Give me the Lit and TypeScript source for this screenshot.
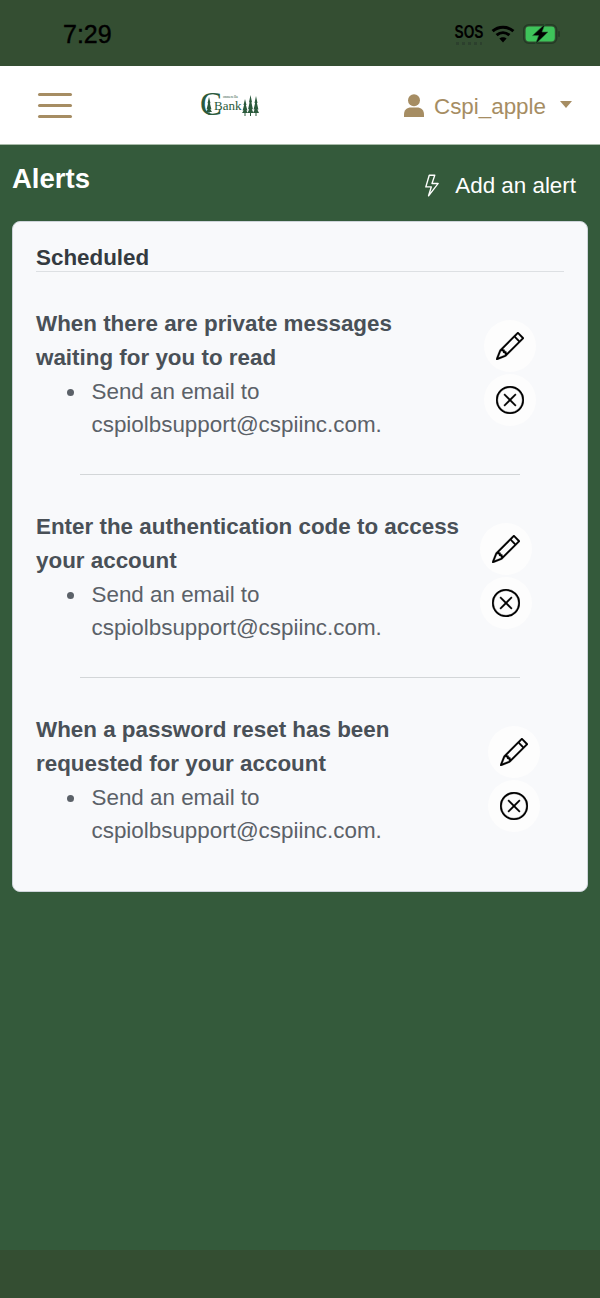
import { LitElement, html, css, svg } from "lit";
import { customElement } from "lit/decorators.js";

const pencil = svg`<path d="M12.146.146a.5.5 0 0 1 .708 0l3 3a.5.5 0 0 1 0 .708l-10 10a.5.5 0 0 1-.168.11l-5 2a.5.5 0 0 1-.65-.65l2-5a.5.5 0 0 1 .11-.168l10-10zM11.207 2.5 13.5 4.793 14.793 3.5 12.5 1.207 11.207 2.5zm1.586 3L10.5 3.207 4 9.707V10h.5a.5.5 0 0 1 .5.5v.5h.5a.5.5 0 0 1 .5.5v.5h.293l6.5-6.5zm-9.761 5.175-.106.106-1.528 3.821 3.821-1.528.106-.106A.5.5 0 0 1 5 12.5V12h-.5a.5.5 0 0 1-.5-.5V11h-.5a.5.5 0 0 1-.468-.325z"/>`;
const xCircle = svg`<path d="M8 15A7 7 0 1 1 8 1a7 7 0 0 1 0 14zm0 1A8 8 0 1 0 8 0a8 8 0 0 0 0 16z"/><path d="M4.646 4.646a.5.5 0 0 1 .708 0L8 7.293l2.646-2.647a.5.5 0 0 1 .708.708L8.707 8l2.647 2.646a.5.5 0 0 1-.708.708L8 8.707l-2.646 2.647a.5.5 0 0 1-.708-.708L7.293 8 4.646 5.354a.5.5 0 0 1 0-.708z"/>`;
const bolt = svg`<path d="M5.52.359A.5.5 0 0 1 6 0h4a.5.5 0 0 1 .474.658L8.694 6H12.5a.5.5 0 0 1 .395.807l-7 9a.5.5 0 0 1-.873-.454L6.823 9.5H3.5a.5.5 0 0 1-.48-.641l2.5-8.5zM6.374 1 4.168 8.5H7.5a.5.5 0 0 1 .478.647L6.78 13.04 11.478 7H8a.5.5 0 0 1-.474-.658L9.306 1H6.374z"/>`;

/* Slim stacked conifer for the bank mark: x is the trunk, top/bottom the extent */
const tree = (x: number, top: number, bottom: number) => {
  const h = bottom - top;
  return svg`<path d="M${x} ${top} L${x + 1.5} ${top + h * 0.35} H${x + 0.9} L${x + 2.4} ${top + h * 0.68} H${x + 1.3} L${x + 3} ${bottom - 3} H${x + 0.5} V${bottom} H${x - 0.5} V${bottom - 3} H${x - 3} L${x - 1.3} ${top + h * 0.68} H${x - 2.4} L${x - 0.9} ${top + h * 0.35} H${x - 1.5} Z"/>`;
};

interface Alert {
  title: string;
  /* Left edge of the action buttons within the row */
  actionsLeft: number;
}

const alerts: Alert[] = [
  { title: "When there are private messages waiting for you to read", actionsLeft: 448 },
  { title: "Enter the authentication code to access your account", actionsLeft: 444 },
  { title: "When a password reset has been requested for your account", actionsLeft: 452 },
];

@customElement("app-root")
export class AppRoot extends LitElement {
  static styles = css`
    :host {
      display: flex;
      flex-direction: column;
      height: 1298px;
      background: #345a3b;
      font-family: "Liberation Sans", Arial, sans-serif;
      font-size: 22.4px;
      line-height: 33.6px;
    }
    .status {
      height: 66px;
      flex: none;
      background: #344e32;
      display: flex;
      align-items: center;
      justify-content: space-between;
      padding: 0 39px 0 63px;
      box-sizing: border-box;
      color: #000;
    }
    .time {
      font-size: 25px;
      -webkit-text-stroke: 0.4px #000;
      line-height: 30px;
      margin-top: 2px;
    }
    .indicators {
      display: flex;
      align-items: center;
      gap: 8px;
      margin-top: 1px;
    }
    .sos {
      font-size: 18px;
      font-weight: 700;
      line-height: 15px;
      width: 29px;
      display: flex;
      flex-direction: column;
      align-items: center;
      margin-top: 3px;
    }
    .sos span {
      display: block;
      transform: scaleX(0.76);
    }
    .sos i {
      display: block;
      width: 26px;
      height: 3px;
      margin-top: 2px;
      background: repeating-linear-gradient(90deg, #27372a 0 3px, transparent 3px 6px);
      opacity: 0.6;
    }
    .wifi { width: 24px; height: 18px; display: block; }
    .battery { width: 38px; height: 20px; display: block; }

    .nav {
      height: 79px;
      flex: none;
      background: #fff;
      display: flex;
      align-items: center;
      justify-content: space-between;
      padding: 0 28px 0 38px;
      box-sizing: border-box;
      border-bottom: 1px solid #a9bba9;
      color: #a68d63;
    }
    .burger {
      display: flex;
      flex-direction: column;
      gap: 8px;
      width: 34px;
      margin-top: 1px;
    }
    .burger i {
      display: block;
      height: 3px;
      border-radius: 2px;
      background: #a68d63;
    }
    .logo {
      width: 60px;
      height: 26px;
      display: block;
      margin: 1px 0 0 -16px;
      overflow: visible;
    }
    .logo text { font-family: "Liberation Serif", serif; }
    .user {
      display: flex;
      align-items: center;
      margin-top: 3px;
    }
    .user svg { width: 20px; height: 23px; fill: currentColor; margin-right: 10px; margin-top: -3px; }
    .caret {
      width: 0;
      height: 0;
      margin-left: 14px;
      margin-bottom: 5px;
      border-left: 6.5px solid transparent;
      border-right: 6.5px solid transparent;
      border-top: 7px solid #a68d63;
    }

    .head {
      display: flex;
      justify-content: space-between;
      padding: 0 24px 0 12px;
      color: #fff;
      height: 76px;
      box-sizing: border-box;
      flex: none;
    }
    h1 {
      margin: 17px 0 0;
      font-size: 27.5px;
      line-height: 34px;
      font-weight: 700;
    }
    .add {
      display: flex;
      align-items: center;
      gap: 12px;
      height: 34px;
      margin-top: 24px;
    }
    .add svg { width: 22px; height: 23px; fill: currentColor; margin-top: -2px; }

    .card {
      margin: 0 12px;
      height: 671px;
      box-sizing: border-box;
      flex: none;
      background: #f8f9fb;
      border: 1px solid #ced4da;
      border-radius: 8px;
      padding: 19px 23px 0;
    }
    h2 {
      margin: 0;
      font-size: 22.4px;
      line-height: 33.6px;
      height: 30px;
      font-weight: 700;
      color: #343a40;
      border-bottom: 1px solid #dde0e3;
    }
    .alert {
      position: relative;
      display: flex;
      height: 203px;
      box-sizing: border-box;
      padding-top: 35px;
      border-bottom: 1px solid transparent;
    }
    .alert + .alert::before {
      content: "";
      position: absolute;
      left: 44px;
      width: 440px;
      top: -1px;
      height: 1px;
      background: #d3d6d8;
    }
    .body { width: 430px; flex: none; color: #5b6168; }
    h3 {
      margin: 0;
      font-size: 22.4px;
      line-height: 33.6px;
      font-weight: 700;
      color: #495057;
    }
    ul {
      margin: 0.4px 0 0;
      padding-left: 55.5px;
      list-style: none;
    }
    li { position: relative; }
    li::before {
      content: "";
      position: absolute;
      left: -24.5px;
      top: 14px;
      width: 7px;
      height: 7px;
      border-radius: 50%;
      background: #5b6168;
    }
    .actions {
      position: absolute;
      top: 48px;
      display: flex;
      flex-direction: column;
      gap: 2px;
    }
    .btn {
      width: 52px;
      height: 52px;
      border-radius: 50%;
      background: #fdfdfd;
      display: flex;
      align-items: center;
      justify-content: center;
    }
    .btn svg { width: 28px; height: 28px; fill: #000; stroke: #000; stroke-width: 0.15; }
    .fill { flex: 1; }
    .home {
      height: 48px;
      flex: none;
      background: #344e32;
    }
  `;

  render() {
    return html`
      <div class="status">
        <div class="time">7:29</div>
        <div class="indicators">
          <div class="sos"><span>SOS</span><i></i></div>
          <svg class="wifi" viewBox="0 0 24 18" fill="none" stroke="#000" stroke-width="3">
            <path d="M1.6 6.2C7.6 0.8 16.4 0.8 22.4 6.2"/>
            <path d="M5.6 10.2C9.4 6.8 14.6 6.8 18.4 10.2"/>
            <path d="M12 17.6 8.4 13.6C10.4 11.8 13.6 11.8 15.6 13.6Z" fill="#000" stroke="none"/>
          </svg>
          <svg class="battery" viewBox="0 0 38 20">
            <rect x="0.7" y="0.7" width="33" height="18.6" rx="5" fill="none" stroke="#243a25" stroke-width="1.4"/>
            <rect x="2.6" y="2.6" width="29.2" height="14.8" rx="3.4" fill="#3ec45a"/>
            <rect x="35.2" y="7" width="1.6" height="6" rx="0.8" fill="#243a25"/>
            <path d="M22 0 9.5 11.6H15.6L12.5 20 25 8H19Z" fill="#000" stroke="#2c6b3a" stroke-width="0.6"/>
          </svg>
        </div>
      </div>

      <div class="nav">
        <div class="burger"><i></i><i></i><i></i></div>
        <svg class="logo" viewBox="0 0 60 26" fill="#2b5a3c">
          <text x="0" y="22" font-size="33">C</text>
          <text x="14" y="17" font-size="13">Bank</text>
          <text x="23" y="5" font-size="4">onnerella</text>
          ${tree(9, 4, 22)}${tree(45, 6, 23)}${tree(50.5, 2, 23)}${tree(56, 3, 23)}
        </svg>
        <div class="user">
          <svg viewBox="0 0 20 23">
            <circle cx="10" cy="6.2" r="6"/>
            <path d="M0 23V20.5C0 16 3 13.5 7 13.5H13C17 13.5 20 16 20 20.5V23Z"/>
          </svg>
          <span>Cspi_apple</span>
          <span class="caret"></span>
        </div>
      </div>

      <div class="head">
        <h1>Alerts</h1>
        <div class="add">
          <svg viewBox="0 0 16 16">${bolt}</svg>
          <span>Add an alert</span>
        </div>
      </div>

      <div class="card">
        <h2>Scheduled</h2>
        ${alerts.map(
          (a) => html`
            <div class="alert">
              <div class="body">
                <h3>${a.title}</h3>
                <ul><li>Send an email to cspiolbsupport@cspiinc.com.</li></ul>
              </div>
              <div class="actions" style="left:${a.actionsLeft}px">
                <div class="btn"><svg viewBox="0 0 16 16">${pencil}</svg></div>
                <div class="btn"><svg viewBox="0 0 16 16">${xCircle}</svg></div>
              </div>
            </div>
          `
        )}
      </div>

      <div class="fill"></div>
      <div class="home"></div>
    `;
  }
}
